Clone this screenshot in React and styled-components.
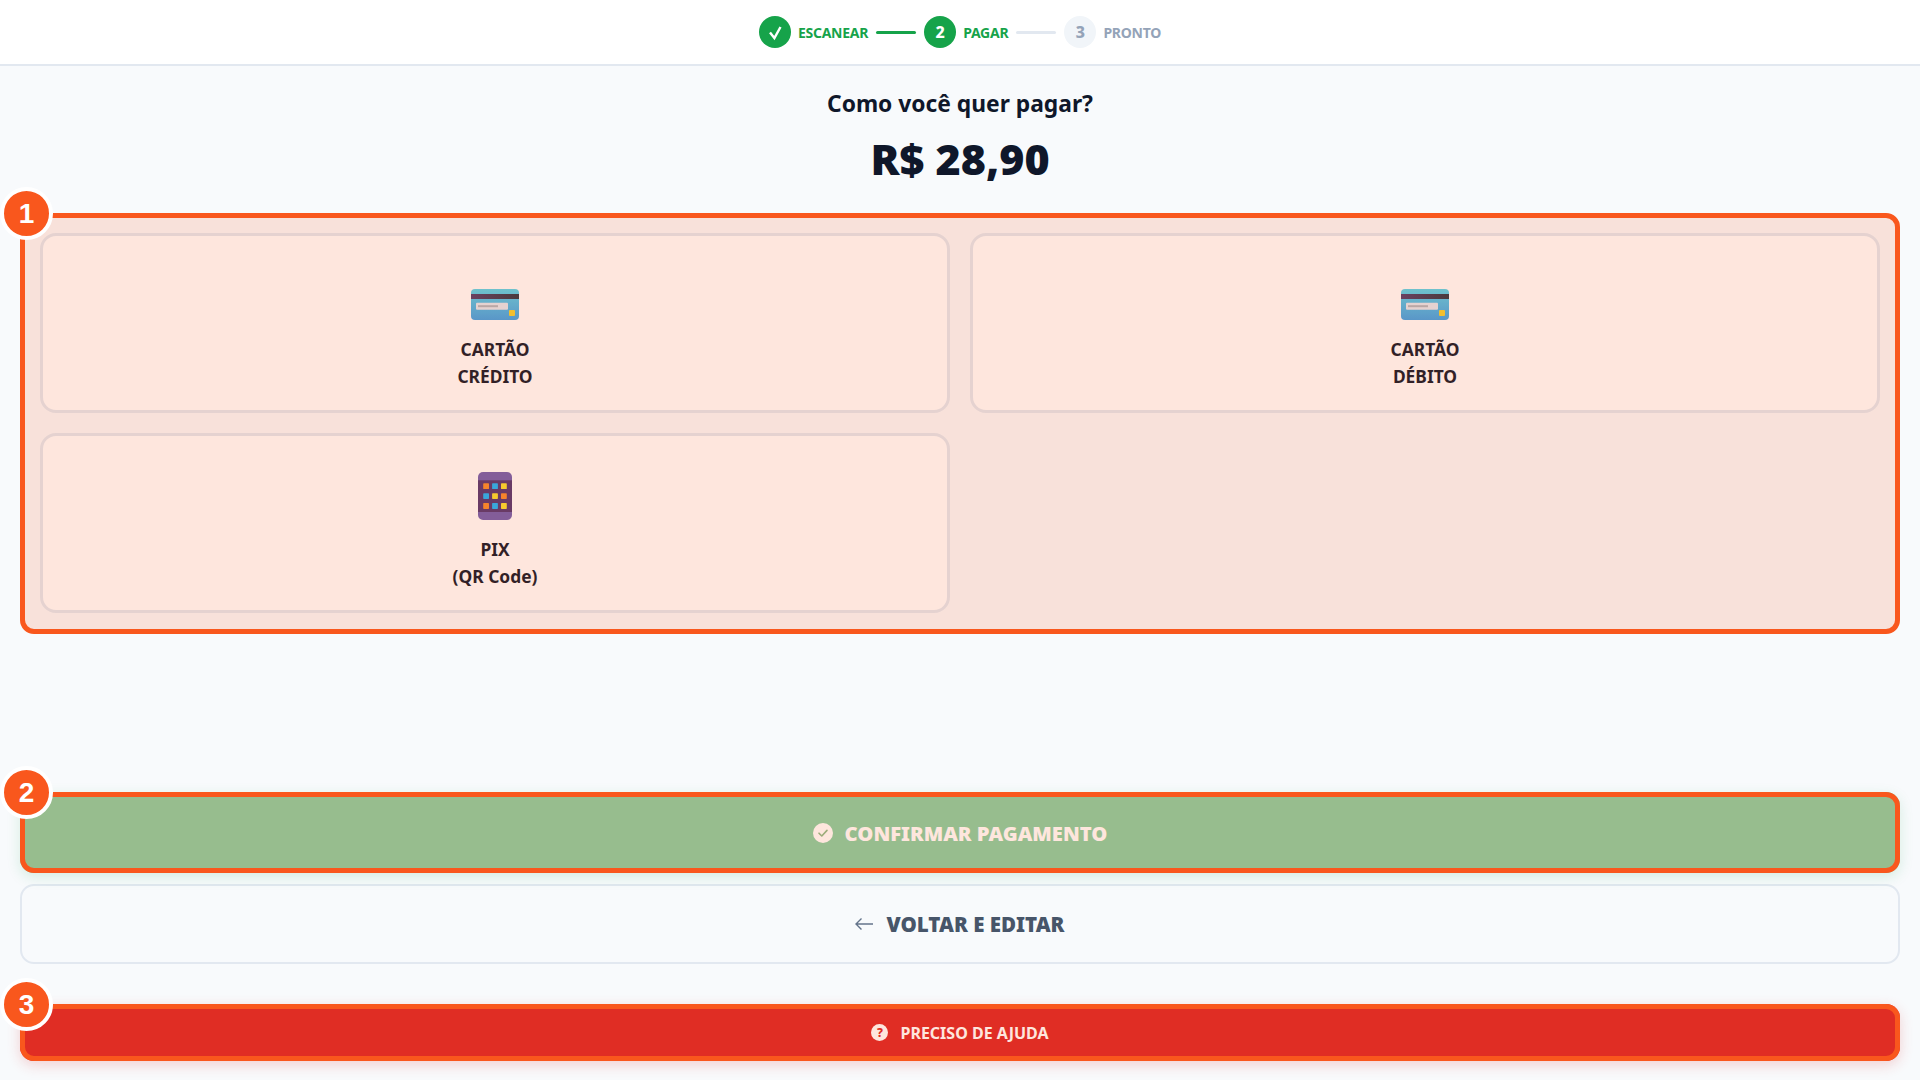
import React from 'react';
import styled, { createGlobalStyle } from 'styled-components';

const GlobalStyle = createGlobalStyle`
  * { box-sizing: border-box; }
  html, body { margin: 0; padding: 0; height: 100%; }
  body {
    background: #f8fafc;
    font-family: "Noto Sans", "Open Sans", sans-serif;
    color: #0f172a;
  }
`;

const Page = styled.div`
  height: 100vh;
  display: flex;
  flex-direction: column;
  overflow: hidden;
`;

const TopBar = styled.header`
  height: 66px;
  flex: none;
  background: #fff;
  border-bottom: 2px solid #e2e8f0;
  display: flex;
  align-items: center;
  justify-content: center;
  gap: 8px;
`;

const Step = styled.div`
  display: flex;
  align-items: center;
  gap: 7px;
`;

const StepDot = styled.span`
  width: 32px;
  height: 32px;
  border-radius: 50%;
  display: flex;
  align-items: center;
  justify-content: center;
  font-size: 16px;
  font-weight: 800;
  background: ${p => (p.$on ? '#16a34a' : '#f1f5f9')};
  color: ${p => (p.$on ? '#fff' : '#94a3b8')};
`;

const StepLabel = styled.span`
  font-size: 14px;
  font-weight: 700;
  letter-spacing: -0.25px;
  color: ${p => (p.$on ? '#16a34a' : '#94a3b8')};
`;

const StepLine = styled.span`
  width: 40px;
  height: 3px;
  border-radius: 2px;
  background: ${p => (p.$on ? '#16a34a' : '#e2e8f0')};
`;

const Main = styled.main`
  flex: 1;
  display: flex;
  flex-direction: column;
  padding: 19px 20px 19px;
`;

const Title = styled.h1`
  margin: 0;
  height: 38px;
  line-height: 38px;
  text-align: center;
  font-size: 22.8px;
  font-weight: 700;
`;

const Price = styled.div`
  margin: 8px 0 26px;
  height: 56px;
  line-height: 56px;
  text-align: center;
  font-size: 43px;
  font-weight: 900;
`;

// orange tour highlight laid on top of the element it marks
const Highlight = styled.div`
  position: relative;
  border-radius: 14px;
  &::after {
    content: '';
    position: absolute;
    inset: 0;
    border: 5px solid #f9571d;
    border-radius: inherit;
    background: rgba(249, 87, 29, 0.15);
    pointer-events: none;
  }
`;

const Badge = styled.span`
  position: absolute;
  z-index: 2;
  left: -20px;
  top: -26px;
  width: 53px;
  height: 53px;
  border-radius: 50%;
  background: #f9571d;
  border: 4px solid #fff;
  color: #fff;
  display: flex;
  align-items: center;
  justify-content: center;
  font-family: "Liberation Sans", Arial, sans-serif;
  font-size: 28px;
  font-weight: 700;
`;

const MethodGrid = styled.div`
  display: grid;
  grid-template-columns: 1fr 1fr;
  grid-auto-rows: 180px;
  gap: 20px;
  padding: 20px 20px 21px;
  border-radius: inherit;
`;

const MethodCard = styled.button`
  border: 3px solid #e2e8f0;
  border-radius: 16px;
  background: #fff;
  font-family: inherit;
  color: #0f172a;
  font-size: 17.4px;
  font-weight: 700;
  line-height: 27px;
  display: flex;
  flex-direction: column;
  align-items: center;
  justify-content: flex-start;
  gap: 16px;
  padding: 36px 0 0;
`;

const IconSlot = styled.span`
  height: 48px;
  display: flex;
  align-items: flex-end;
  justify-content: center;
`;

const Spacer = styled.div`
  flex: 1;
`;

const ConfirmButton = styled.button`
  width: 100%;
  height: 81px;
  display: flex;
  align-items: center;
  justify-content: center;
  gap: 12px;
  border: none;
  border-radius: inherit;
  background: rgba(22, 163, 74, 0.5);
  color: #fff;
  font-family: inherit;
  font-size: 20.2px;
  font-weight: 900;
  box-shadow: 0 4px 14px rgba(22, 163, 74, 0.15);
`;

const BackButton = styled.button`
  margin-top: 11px;
  width: 100%;
  height: 80px;
  display: flex;
  align-items: center;
  justify-content: center;
  gap: 13px;
  border: 2px solid #e2e8f0;
  border-radius: 14px;
  background: transparent;
  color: #475569;
  font-family: inherit;
  font-size: 20.5px;
  font-weight: 900;
`;

const HelpWrap = styled(Highlight)`
  margin-top: 40px;
`;

const HelpButton = styled.button`
  width: 100%;
  height: 57px;
  display: flex;
  align-items: center;
  justify-content: center;
  gap: 12px;
  border: none;
  border-radius: inherit;
  background: #dc2626;
  color: #fff;
  font-family: inherit;
  font-size: 16px;
  font-weight: 700;
  box-shadow: 0 4px 14px rgba(220, 38, 38, 0.2);
`;

const HelpDot = styled.span`
  width: 17px;
  height: 17px;
  border-radius: 50%;
  background: #fff;
  color: #dc2626;
  font-size: 12px;
  font-weight: 800;
  line-height: 17px;
  text-align: center;
`;

const CardIcon = () => (
  <svg width="48" height="31" viewBox="0 0 48 31">
    <defs>
      <linearGradient id="cardBody" x1="0" y1="0" x2="0" y2="1">
        <stop offset="0" stopColor="#57d5ec" />
        <stop offset="1" stopColor="#3ea2e7" />
      </linearGradient>
      <linearGradient id="cardStripe" x1="0" y1="0" x2="1" y2="0">
        <stop offset="0" stopColor="#513c6c" />
        <stop offset="1" stopColor="#2d3742" />
      </linearGradient>
    </defs>
    <rect width="48" height="31" rx="4" fill="url(#cardBody)" />
    <rect y="5" width="48" height="5" fill="url(#cardStripe)" />
    <rect x="5" y="13.7" width="32" height="7" rx="1" fill="#e2e8f0" />
    <rect x="7" y="16.2" width="20" height="2" fill="#aeb5be" />
    <rect x="38" y="21" width="6" height="6" rx="1" fill="#f4d232" />
  </svg>
);

const KeypadIcon = () => {
  const colors = ['#f58c2e', '#19b4fc', '#f7df32', '#19b4fc', '#f7df32', '#f58c2e', '#f58c2e', '#19b4fc', '#f7df32'];
  return (
    <svg width="34" height="48" viewBox="0 0 34 48">
      <rect width="34" height="48" rx="5" fill="#6f5fb0" />
      <rect y="8.3" width="34" height="31.7" fill="#513573" />
      {colors.map((c, i) => (
        <rect key={i} x={5.2 + (i % 3) * 8.9} y={11.3 + Math.floor(i / 3) * 9.9} width="5.8" height="5.8" rx="0.7" fill={c} />
      ))}
    </svg>
  );
};

const StepCheck = () => (
  <svg width="32" height="32" viewBox="0 0 32 32">
    <path d="M11 16.5l4.4 5.5L21.5 11" fill="none" stroke="#fff" strokeWidth="2.4" />
  </svg>
);

const CheckBadge = () => (
  <svg width="20" height="20" viewBox="0 0 20 20">
    <circle cx="10" cy="10" r="10" fill="#fff" />
    <path d="M6 10.2l2.8 2.8 5.2-5.6" fill="none" stroke="#8dbb8b" strokeWidth="1.6" strokeLinecap="round" strokeLinejoin="round" />
  </svg>
);

const BackArrow = () => (
  <svg width="18" height="12" viewBox="0 0 18 12">
    <path d="M18 6H1M6.5.5L1 6l5.5 5.5" fill="none" stroke="#64748b" strokeWidth="1.4" />
  </svg>
);

export default function App() {
  return (
    <Page>
      <GlobalStyle />
      <TopBar>
        <Step>
          <StepDot $on><StepCheck /></StepDot>
          <StepLabel $on>ESCANEAR</StepLabel>
        </Step>
        <StepLine $on />
        <Step>
          <StepDot $on>2</StepDot>
          <StepLabel $on>PAGAR</StepLabel>
        </Step>
        <StepLine />
        <Step>
          <StepDot>3</StepDot>
          <StepLabel>PRONTO</StepLabel>
        </Step>
      </TopBar>
      <Main>
        <Title>Como você quer pagar?</Title>
        <Price>R$ 28,90</Price>
        <Highlight>
          <Badge>1</Badge>
          <MethodGrid>
            <MethodCard>
              <IconSlot><CardIcon /></IconSlot>
              <span>CARTÃO<br />CRÉDITO</span>
            </MethodCard>
            <MethodCard>
              <IconSlot><CardIcon /></IconSlot>
              <span>CARTÃO<br />DÉBITO</span>
            </MethodCard>
            <MethodCard>
              <IconSlot><KeypadIcon /></IconSlot>
              <span>PIX<br />(QR Code)</span>
            </MethodCard>
          </MethodGrid>
        </Highlight>
        <Spacer />
        <Highlight>
          <Badge>2</Badge>
          <ConfirmButton><CheckBadge />CONFIRMAR PAGAMENTO</ConfirmButton>
        </Highlight>
        <BackButton><BackArrow />VOLTAR E EDITAR</BackButton>
        <HelpWrap>
          <Badge>3</Badge>
          <HelpButton><HelpDot>?</HelpDot>PRECISO DE AJUDA</HelpButton>
        </HelpWrap>
      </Main>
    </Page>
  );
}
